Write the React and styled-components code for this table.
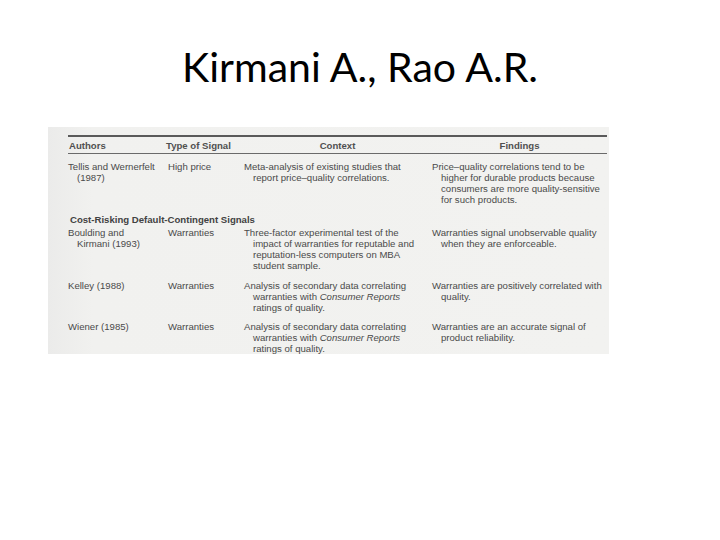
import React from "react";
import styled, { createGlobalStyle } from "styled-components";

const Global = createGlobalStyle`
  html, body { margin: 0; padding: 0; background: #ffffff; }
  body { width: 720px; height: 540px; overflow: hidden; }
`;

const Slide = styled.div`
  width: 720px;
  height: 540px;
  display: flex;
  flex-direction: column;
  align-items: center;
  background: #ffffff;
`;

const Title = styled.h1`
  margin: 41px 0 0 0;
  font-family: Lato, "Open Sans", sans-serif;
  font-weight: 400;
  font-size: 41px;
  line-height: 52px;
  color: #000000;
`;

const Scan = styled.div`
  margin-top: 34px;
  align-self: flex-start;
  margin-left: 48px;
  width: 561px;
  height: 227px;
  box-sizing: border-box;
  padding: 8px 2px 0 20px;
  overflow: hidden;
  background: linear-gradient(90deg, #ebebea 0%, #f1f1ef 8%, #f2f2f0 100%);
  font-family: "Liberation Sans", Arial, sans-serif;
  font-size: 9.6px;
  line-height: 11px;
  color: #4a4a4a;
  white-space: nowrap;
`;

const Table = styled.div`
  display: flex;
  flex-direction: column;
  border-top: 2px solid #5a5a5a;
`;

const Cols = "98px 77px 189px 175px";

const Head = styled.div`
  display: grid;
  grid-template-columns: ${Cols};
  height: 16px;
  align-items: center;
  border-bottom: 1.5px solid #6a6a6a;
  font-weight: 700;
  color: #505050;
`;

const HeadCell = styled.div`
  text-align: ${(p) => (p.$center ? "center" : "left")};
  padding-left: ${(p) => p.$pad || 0}px;
`;

const Row = styled.div`
  display: grid;
  grid-template-columns: ${Cols};
  margin-top: ${(p) => p.$gap}px;
`;

const Cell = styled.div`
  padding-left: ${(p) => p.$pad || 0}px;
`;

const Line = styled.div`
  padding-left: ${(p) => (p.$indent ? 9 : 0)}px;
`;

const Section = styled.div`
  margin-top: ${(p) => p.$gap}px;
  padding-left: 2px;
  font-weight: 700;
  color: #424242;
`;

const rows1 = [
  {
    gap: 7,
    a: ["Tellis and Wernerfelt", "(1987)"],
    t: ["High price"],
    c: ["Meta-analysis of existing studies that", "report price–quality correlations."],
    f: [
      "Price–quality correlations tend to be",
      "higher for durable products because",
      "consumers are more quality-sensitive",
      "for such products.",
    ],
  },
];

const CR = <i>Consumer Reports</i>;

const rows2 = [
  {
    gap: 2,
    a: ["Boulding and", "Kirmani (1993)"],
    t: ["Warranties"],
    c: [
      "Three-factor experimental test of the",
      "impact of warranties for reputable and",
      "reputation-less computers on MBA",
      "student sample.",
    ],
    f: ["Warranties signal unobservable quality", "when they are enforceable."],
  },
  {
    gap: 9,
    a: ["Kelley (1988)"],
    t: ["Warranties"],
    c: ["Analysis of secondary data correlating", <>warranties with {CR}</>, "ratings of quality."],
    f: ["Warranties are positively correlated with", "quality."],
  },
  {
    gap: 8,
    a: ["Wiener (1985)"],
    t: ["Warranties"],
    c: ["Analysis of secondary data correlating", <>warranties with {CR}</>, "ratings of quality."],
    f: ["Warranties are an accurate signal of", "product reliability."],
  },
];

const Lines = ({ items }) =>
  items.map((l, i) => (
    <Line key={i} $indent={i > 0}>
      {l}
    </Line>
  ));

const renderRow = (r, i) => (
  <Row key={i} $gap={r.gap}>
    <Cell>
      <Lines items={r.a} />
    </Cell>
    <Cell $pad={2}>
      <Lines items={r.t} />
    </Cell>
    <Cell $pad={1}>
      <Lines items={r.c} />
    </Cell>
    <Cell>
      <Lines items={r.f} />
    </Cell>
  </Row>
);

export default function App() {
  return (
    <>
      <Global />
      <Slide>
        <Title>Kirmani A., Rao A.R.</Title>
        <Scan>
          <Table>
            <Head>
              <HeadCell $pad={1}>Authors</HeadCell>
              <HeadCell>Type of Signal</HeadCell>
              <HeadCell $center>Context</HeadCell>
              <HeadCell $center>Findings</HeadCell>
            </Head>
            {rows1.map(renderRow)}
            <Section $gap={9}>Cost-Risking Default-Contingent Signals</Section>
            {rows2.map(renderRow)}
          </Table>
        </Scan>
      </Slide>
    </>
  );
}
